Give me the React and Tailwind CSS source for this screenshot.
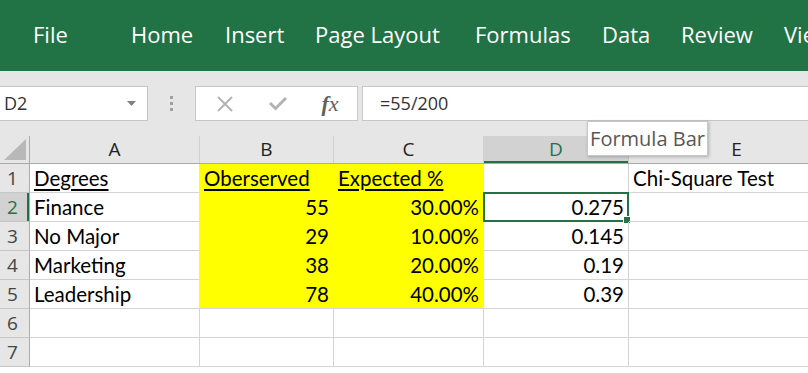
import React from "react";

const tabs = [
  ["File", "w-[98px]"],
  ["Home", "w-[94px]"],
  ["Insert", "w-[90px]"],
  ["Page Layout", "w-[160px]"],
  ["Formulas", "w-[127px]"],
  ["Data", "w-[79px]"],
  ["Review", "w-[103px]"],
  ["View", "w-[80px]"],
];

const cols = [
  ["A", "w-[170px]"],
  ["B", "w-[134px]"],
  ["C", "w-[150px]"],
  ["D", "w-[145px]"],
  ["E", "w-[216px]"],
];

const rows = [
  [
    { t: "Degrees", u: true },
    { t: "Oberserved", u: true, y: true },
    { t: "Expected %", u: true, y: true },
    { t: "" },
    { t: "Chi-Square Test" },
  ],
  [
    { t: "Finance" },
    { t: "55", r: true, y: true },
    { t: "30.00%", r: true, y: true },
    { t: "0.275", r: true, sel: true },
    { t: "" },
  ],
  [
    { t: "No Major" },
    { t: "29", r: true, y: true },
    { t: "10.00%", r: true, y: true },
    { t: "0.145", r: true },
    { t: "" },
  ],
  [
    { t: "Marketing" },
    { t: "38", r: true, y: true },
    { t: "20.00%", r: true, y: true },
    { t: "0.19", r: true },
    { t: "" },
  ],
  [
    { t: "Leadership" },
    { t: "78", r: true, y: true },
    { t: "40.00%", r: true, y: true },
    { t: "0.39", r: true },
    { t: "" },
  ],
  [{ t: "" }, { t: "" }, { t: "" }, { t: "" }, { t: "" }],
  [{ t: "" }, { t: "" }, { t: "" }, { t: "" }, { t: "" }],
];

export default function App() {
  return (
    <div className="w-[808px] h-[373px] overflow-hidden bg-white relative font-['Open_Sans',sans-serif]">
      {/* Ribbon */}
      <div className="h-[71px] bg-[#217346] flex items-center pl-[33px] text-white text-[22px] whitespace-nowrap pb-[2px] overflow-hidden">
        {tabs.map(([t, w]) => (
          <div key={t} className={`${w} shrink-0`}>
            {t}
          </div>
        ))}
      </div>

      {/* Formula bar area */}
      <div className="h-[65px] bg-[#e6e6e6] flex items-start pt-[15px]">
        <div className="w-[148px] h-[35px] bg-white border border-l-0 border-[#c6c6c6] flex items-center justify-between pl-[4px] pr-[11px] shrink-0">
          <span className="text-[18px] text-[#333]">D2</span>
          <svg width="9" height="5" viewBox="0 0 9 5">
            <polygon points="0,0 9,0 4.5,5" fill="#808080" />
          </svg>
        </div>
        <div className="w-[47px] h-[35px] flex items-center justify-center shrink-0">
          <div className="flex flex-col gap-[3px]">
            <div className="w-[3px] h-[3px] bg-[#a0a0a0]" />
            <div className="w-[3px] h-[3px] bg-[#a0a0a0]" />
            <div className="w-[3px] h-[3px] bg-[#a0a0a0]" />
          </div>
        </div>
        <div className="w-[163px] h-[35px] bg-white border border-[#c6c6c6] flex items-center shrink-0">
          <div className="w-[55px] flex justify-center pl-[2px]">
            <svg width="16" height="16" viewBox="0 0 16 16">
              <path d="M1 1 L15 15 M15 1 L1 15" stroke="#b3b3b3" strokeWidth="2" />
            </svg>
          </div>
          <div className="w-[54px] flex justify-center">
            <svg width="18" height="15" viewBox="0 0 18 15">
              <path d="M1 7 L6.5 12.5 L17 2" stroke="#b3b3b3" strokeWidth="3" fill="none" />
            </svg>
          </div>
          <div className="w-[50px] flex justify-center">
            <span className="font-['Liberation_Serif',serif] italic text-[22px] text-[#606060] leading-none">
              <span className="font-bold">f</span>x
            </span>
          </div>
        </div>
        <div className="w-[4px] shrink-0" />
        <div className="flex-1 h-[35px] bg-white border border-r-0 border-[#c6c6c6] flex items-center pl-[17px]">
          <span className="text-[18px] text-[#333]">=55/200</span>
        </div>
      </div>

      {/* Column headers */}
      <div className="flex h-[28px] bg-[#e6e6e6] border-b border-[#ababab] whitespace-nowrap">
        <div className="w-[30px] shrink-0 border-r border-[#ababab] flex items-end justify-end pr-[3px] pb-[3px]">
          <svg width="22" height="21" viewBox="0 0 22 21">
            <polygon points="22,0 22,21 0,21" fill="#b8b8b8" />
          </svg>
        </div>
        {cols.map(([c, w]) => (
          <div
            key={c}
            className={`${w} shrink-0 flex items-end justify-center text-[19px] leading-none pb-[4px] border-r ${
              c === "D"
                ? "bg-[#d2d2d2] text-[#217346] border-[#c6c6c6] shadow-[inset_0_-2px_0_#217346]"
                : "text-[#222] border-[#d0d0d0]"
            }`}
          >
            {c}
          </div>
        ))}
      </div>

      {/* Grid rows */}
      <div className="font-['Lato',sans-serif] text-[20.5px] text-black">
        {rows.map((cells, ri) => {
          const lastYellow = ri === 4;
          return (
            <div key={ri} className="flex h-[29px] whitespace-nowrap">
              <div
                className={`w-[30px] shrink-0 flex items-center pl-[7px] font-['Open_Sans',sans-serif] text-[19px] border-b border-r ${
                  ri === 1
                    ? "bg-[#d2d2d2] text-[#217346] border-b-[#c6c6c6] border-r-[#ababab] shadow-[inset_-2px_0_0_#217346]"
                    : "bg-[#e6e6e6] text-[#444] border-b-[#c6c6c6] border-r-[#ababab]"
                }`}
              >
                {ri + 1}
              </div>
              {cells.map((cell, ci) => {
                const w = cols[ci][1];
                const nextYellow = cells[ci + 1] && cells[ci + 1].y;
                let border = "border-b border-r border-[#d4d4d4]";
                if (cell.y) {
                  border = lastYellow
                    ? "border-b border-r border-b-[#d4d4d4] border-r-[#ffff00]"
                    : "border-b border-r border-[#ffff00]";
                } else if (nextYellow) {
                  border = "border-b border-r border-b-[#d4d4d4] border-r-[#ffff00]";
                }
                return (
                  <div
                    key={ci}
                    className={`${w} shrink-0 relative flex items-end pb-[4px] leading-none ${border} ${
                      cell.y ? "bg-[#ffff00]" : ""
                    } ${cell.r ? "justify-end pr-[4px]" : "justify-start pl-[4px]"}`}
                  >
                    <span className={cell.u ? "underline underline-offset-[3px]" : ""}>{cell.t}</span>
                    {cell.sel && (
                      <div className="absolute -left-[1px] -top-[1px] -right-[1px] -bottom-[1px] border-2 border-[#217346] pointer-events-none">
                        <div className="absolute -right-[4px] -bottom-[4px] w-[6px] h-[6px] bg-[#217346] border border-white box-content" />
                      </div>
                    )}
                  </div>
                );
              })}
            </div>
          );
        })}
      </div>

      {/* Tooltip */}
      <div className="absolute left-[587px] top-[121px] w-[121px] h-[35px] bg-white border border-[#c8c8c8] shadow-[1px_1px_3px_rgba(0,0,0,0.25)] flex items-center justify-center text-[20px] text-[#575757] whitespace-nowrap">
        Formula Bar
      </div>
    </div>
  );
}
